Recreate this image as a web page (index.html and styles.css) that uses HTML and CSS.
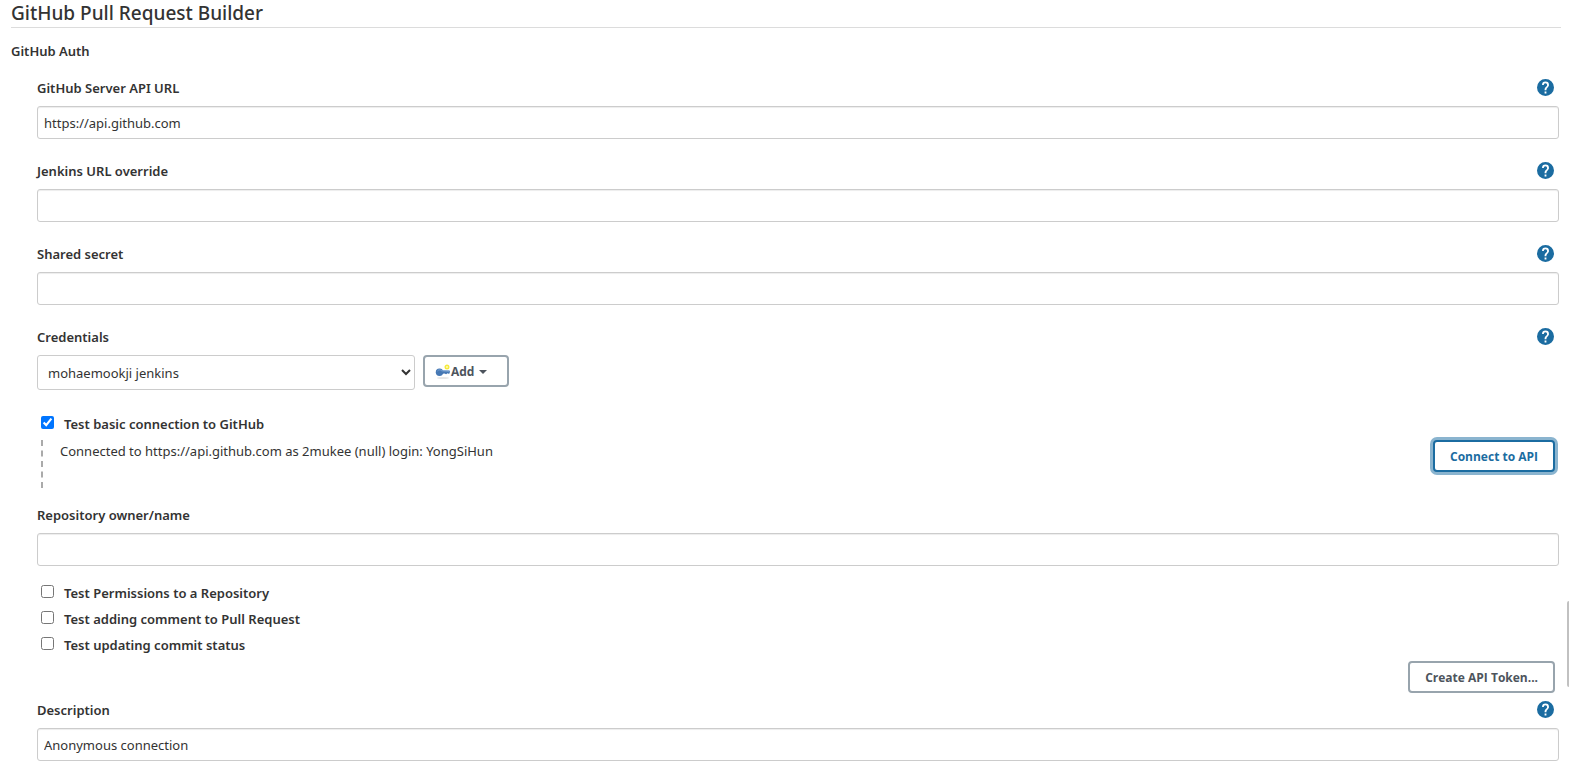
FILE: index.html
```html
<!DOCTYPE html>
<html lang="en">
<head>
<meta charset="utf-8">
<title>GitHub Pull Request Builder</title>
<link rel="stylesheet" href="styles.css">
</head>
<body>
<svg class="sprite" aria-hidden="true">
  <symbol id="help" viewBox="0 0 24 24"><path d="M12 0a12 12 0 1 0 0 24a12 12 0 0 0 0-24zm1.300 20.300h-2.600v-2.600h2.600zm2.500-9.200-1.100 1.100c-.9.900-1.400 1.700-1.400 3.600h-2.600v-.6c0-1.400.5-2.600 1.400-3.500l1.500-1.500c.4-.4.700-1 .7-1.700a2.400 2.400 0 0 0-4.800 0H7.100a4.900 4.900 0 0 1 9.800 0c0 1-.4 1.900-1.100 2.600z"/></symbol>
</svg>
<main class="section">
  <h1 class="section-title">GitHub Pull Request Builder</h1>
  <h2 class="group-title">GitHub Auth</h2>
  <form class="group">
    <div class="field">
      <div class="field-head"><label for="api">GitHub Server API URL</label><button type="button" class="help" aria-label="Help"><svg><use href="#help"/></svg></button></div>
      <input class="text" id="api" type="text" value="https://api.github.com">
    </div>
    <div class="field">
      <div class="field-head"><label for="override">Jenkins URL override</label><button type="button" class="help" aria-label="Help"><svg><use href="#help"/></svg></button></div>
      <input class="text" id="override" type="text">
    </div>
    <div class="field">
      <div class="field-head"><label for="secret">Shared secret</label><button type="button" class="help" aria-label="Help"><svg><use href="#help"/></svg></button></div>
      <input class="text" id="secret" type="password">
    </div>
    <div class="field field-cred">
      <div class="field-head"><label for="cred">Credentials</label><button type="button" class="help" aria-label="Help"><svg><use href="#help"/></svg></button></div>
      <div class="cred-row">
        <select class="select" id="cred"><option>mohaemookji jenkins</option></select>
        <button type="button" class="btn btn-add">
          <svg class="key" viewBox="0 0 16 16"><ellipse cx="8" cy="14" rx="6" ry="1" fill="#e6e6e6"/><circle cx="12" cy="3" r="1.800" fill="#fffbb0" stroke="#f5ea3d" stroke-width="1.400"/><path d="M6 6.500h8.500l.6 1.200-1 2.300-1.500-.7-1.500.9-1.600-.7L6 10z" fill="#4678b4"/><circle cx="4.500" cy="8.200" r="3.700" fill="#4678b4"/><path d="M2.500 7c1-1.500 3-1.500 4.200-.2L14.500 7.300" fill="none" stroke="#7ba5d6"/></svg><span>Add</span><svg class="caret" viewBox="0 0 8 4"><path d="M0 0h8L4 4z"/></svg>
        </button>
      </div>
    </div>
    <div class="check"><input type="checkbox" id="basic" checked><label for="basic">Test basic connection to GitHub</label></div>
    <div class="nested">
      <p class="result">Connected to https://api.github.com as 2mukee (null) login: YongSiHun</p>
      <button type="button" class="btn btn-primary">Connect to API</button>
    </div>
    <div class="field field-repo">
      <div class="field-head"><label for="repo">Repository owner/name</label></div>
      <input class="text" id="repo" type="text">
    </div>
    <div class="checks">
      <div class="check"><input type="checkbox" id="perm"><label for="perm">Test Permissions to a Repository</label></div>
      <div class="check"><input type="checkbox" id="comment"><label for="comment">Test adding comment to Pull Request</label></div>
      <div class="check"><input type="checkbox" id="status"><label for="status">Test updating commit status</label></div>
    </div>
    <div class="actions"><button type="button" class="btn">Create API Token...</button></div>
    <div class="field">
      <div class="field-head"><label for="desc">Description</label><button type="button" class="help" aria-label="Help"><svg><use href="#help"/></svg></button></div>
      <input class="text" id="desc" type="text" value="Anonymous connection">
    </div>
  </form>
</main>
<div class="scroll-thumb"></div>
</body>
</html>
```
FILE: styles.css
```css
* { box-sizing: border-box; }
body {
  margin: 0;
  background: #fff;
  color: #333;
  font: 13px/20px "Noto Sans", "Open Sans", sans-serif;
}
button, input, select { font: inherit; color: inherit; margin: 0; }
.sprite { display: none; }
.section { padding: 0 8px 0 11px; }
.section-title {
  margin: 0 0 13px;
  height: 28px;
  border-bottom: 1px solid #dcdcdc;
  font-size: 19px;
  line-height: 26px;
  font-weight: 500;
}
.group-title { margin: 0 0 17px; font-size: 13px; line-height: 20px; font-weight: 600; }
.group { padding: 0 2px 0 26px; }
.field { margin-bottom: 22px; }
.field-head {
  display: flex;
  align-items: flex-start;
  justify-content: space-between;
  height: 20px;
  margin-bottom: 8px;
  padding-right: 5px;
  font-weight: 600;
}
.help { display: flex; padding: 1px 0 0; border: 0; background: none; color: #1b6ca1; }
.help svg { width: 17px; height: 17px; fill: currentColor; }
.text {
  display: block;
  width: 100%;
  height: 33px;
  padding: 0 6px;
  border: 1px solid #ccc;
  border-radius: 3px;
  background: #fff;
  box-shadow: inset 0 1px 1px rgba(0, 0, 0, .075);
}
.field-cred { margin-bottom: 21px; }
.cred-row { display: flex; align-items: flex-start; gap: 8px; }
.select {
  width: 378px;
  height: 35px;
  padding: 0 0 0 6px;
  border: 1px solid #ccc;
  border-radius: 3px;
  background: #fff;
}
.btn {
  height: 32px;
  padding: 1px 15px 0;
  border: 2px solid #98a4ad;
  border-radius: 4px;
  background: #fff;
  color: #4d545d;
  font-family: "Open Sans", "Noto Sans", sans-serif;
  font-size: 12px;
  line-height: 16px;
  font-weight: 700;
}
.btn-add { display: flex; align-items: center; width: 86px; padding: 1px 10px 0; }
.key { width: 16px; height: 16px; }
.caret { width: 8px; height: 4px; margin-left: 5px; fill: currentColor; }
.btn-primary {
  margin-right: 4px;
  border-color: #1b6ca1;
  color: #1b6ca1;
  box-shadow: 0 0 0 3px #8ab4cf;
}
.check { display: flex; align-items: center; height: 26px; font-weight: 600; }
.check input { width: 13px; height: 13px; margin: 0 10px 3px 4px; }
.nested {
  display: flex;
  align-items: flex-start;
  justify-content: space-between;
  height: 48px;
  margin: 3px 0 17px 4px;
  padding-left: 17px;
  border-left: 2px dashed #aaa;
}
.result { margin: 1px 0 0; }
.field-repo { margin-bottom: 14px; }
.checks { margin-bottom: 3px; }
.actions { display: flex; justify-content: flex-end; margin-bottom: 7px; padding-right: 4px; }
.scroll-thumb {
  position: absolute;
  top: 601px;
  right: 0;
  width: 2px;
  height: 86px;
  border-radius: 2px 0 0 2px;
  background: #c1c1c1;
}
```
